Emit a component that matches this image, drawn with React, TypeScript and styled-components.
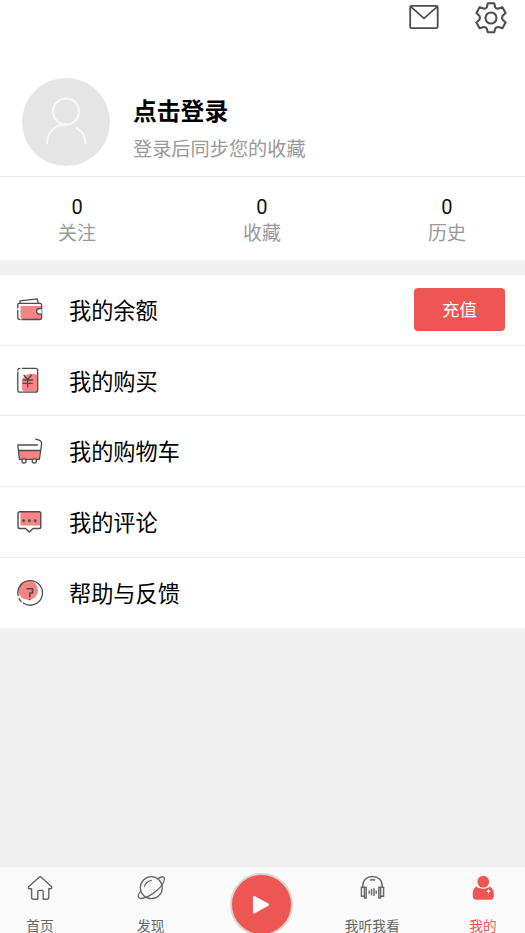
import React from 'react';
import styled, { createGlobalStyle } from 'styled-components';

const GlobalStyle = createGlobalStyle`
  * { box-sizing: border-box; }
  body {
    margin: 0;
    overflow: hidden;
    background: #f0f0f0;
    font-family: Roboto, "Noto Sans CJK SC", sans-serif;
  }
`;

const Screen = styled.div`
  width: 525px;
  height: 933px;
  overflow: hidden;
  display: flex;
  flex-direction: column;
  background: #f0f0f0;
`;

const TopBar = styled.header`
  height: 77px;
  flex: none;
  display: flex;
  justify-content: flex-end;
  align-items: flex-start;
  gap: 34px;
  padding: 1px 17px 0 0;
  background: #fff;
`;

const Profile = styled.section`
  height: 100px;
  flex: none;
  display: flex;
  align-items: flex-start;
  gap: 23px;
  padding: 1px 0 0 22px;
  background: #fff;
  border-bottom: 1px solid #e9e9e9;
`;

const Avatar = styled.div`
  width: 88px;
  height: 88px;
  border-radius: 50%;
  background: #e5e5e5;
`;

const ProfileText = styled.div`
  padding-top: 16px;
`;

const LoginTitle = styled.div`
  font-size: 23.8px;
  line-height: 36px;
  font-weight: 700;
  color: #000;
`;

const LoginHint = styled.div`
  font-size: 19.2px;
  line-height: 28px;
  margin-top: 6px;
  color: #999;
`;

const Stats = styled.section`
  height: 83px;
  flex: none;
  display: flex;
  justify-content: space-between;
  padding: 18px 59px 0 58px;
  background: #fff;
`;

const Stat = styled.div`
  display: flex;
  flex-direction: column;
  align-items: center;
`;

const StatValue = styled.span`
  font-size: 20px;
  line-height: 24px;
  color: #111;
`;

const StatLabel = styled.span`
  margin-top: 1px;
  font-size: 19px;
  line-height: 28px;
  color: #999;
`;

const Menu = styled.ul`
  list-style: none;
  margin: 15px 0 0;
  padding: 0;
  flex: none;
`;

const MenuRow = styled.li`
  height: 70.7px;
  display: flex;
  align-items: center;
  padding: 0 20px 0 14px;
  background: #fff;
  border-bottom: 1px solid #ebebeb;
  &:last-child { border-bottom-color: #fff; }
`;

const MenuLabel = styled.span`
  margin-left: 23px;
  padding-top: 2px;
  flex: 1;
  font-size: 22.2px;
  line-height: 32px;
  color: #000;
`;

const TopUpButton = styled.button`
  width: 91px;
  height: 43px;
  padding: 2px 0 0;
  border: 0;
  border-radius: 4px;
  background: #ee5653;
  color: #fff;
  font: 17.4px/41px Roboto, "Noto Sans CJK SC", sans-serif;
`;

const TabBar = styled.nav`
  height: 66px;
  margin-top: auto;
  flex: none;
  display: flex;
  justify-content: space-between;
  padding: 0 12px 0 10px;
  background: #fafafa;
`;

const Tab = styled.div<{ $active?: boolean }>`
  width: 60px;
  display: flex;
  flex-direction: column;
  align-items: center;
  padding-top: 6px;
  color: ${p => (p.$active ? '#ee5653' : '#666')};
`;

const TabLabel = styled.span`
  margin-top: 13px;
  font-size: 13.7px;
  line-height: 20px;
  white-space: nowrap;
`;

const PlayButton = styled.div`
  width: 63px;
  height: 63px;
  flex: none;
  margin: 6px -1px 0 -2px;
  border-radius: 50%;
  border: 2px solid #dcd2d2;
  background: #ee5653;
`;

const Icon = styled.svg`
  display: block;
  flex: none;
  fill: none;
  stroke-linecap: round;
  stroke-linejoin: round;
`;

const ink = '#4d4d4d';
const pink = '#fb8383';

const MailIcon = () => (
  <Icon width="32" height="32" viewBox="0 0 32 32" stroke={ink} strokeWidth="1.8">
    <rect x="2.2" y="4.8" width="27.5" height="22.4" rx="1.5" />
    <path d="M3 5.8L16 17.3L29 5.8" />
  </Icon>
);

const GearIcon = () => (
  <Icon width="34" height="34" viewBox="0 0 34 34" stroke={ink} strokeWidth="2.1">
    <path d="M13.8 2.2H20.2L21.2 6.2Q22.2 8 24.4 7.6L28.4 6.3L31.6 12L28.6 14.8Q27.4 16.8 28.6 18.8L31.6 21.6L28.4 27.3L24.4 26Q22.2 25.8 21.2 27.8L20.2 31.2H13.8L12.8 27.8Q11.8 25.8 9.6 26L5.6 27.3L2.4 21.6L5.4 18.8Q6.6 16.8 5.4 14.8L2.4 12L5.6 6.3L9.6 7.6Q11.8 8 12.8 6.2Z" />
    <circle cx="17" cy="17" r="5.5" />
  </Icon>
);

const AvatarIcon = () => (
  <Icon width="88" height="88" viewBox="0 0 88 88" stroke="#f8f8f8" strokeWidth="2">
    <circle cx="44" cy="33.5" r="13" />
    <path d="M25 65.5C25 54 33 46.5 44 46.5M54.5 50C60 53 63.5 58 63.5 65.5" />
  </Icon>
);

const WalletIcon = () => (
  <Icon width="32" height="32" viewBox="0 0 32 32" stroke={ink} strokeWidth="1.3">
    <path d="M6.5 12H27V25H9Q6.5 25 6.5 22Z" fill={pink} stroke="none" />
    <path d="M6 8.5V6.8L23.3 4.8L24.2 9M3.8 14V10.5Q3.8 9.3 5 9.3H26Q27.6 9.3 27.6 11V23.5Q27.6 25.5 25.6 25.5H8M3.8 16.5V23.5Q3.8 25.5 6 25.5" />
    <path d="M27.6 14.5H25.4A2.8 2.8 0 0 0 25.4 20.1H27.6" fill="#fff" />
  </Icon>
);

const PurchaseIcon = () => (
  <Icon width="32" height="32" viewBox="0 0 32 32" stroke={ink} strokeWidth="1.3">
    <path d="M8 16C9 9 17 7 23.5 10V26.5H11Q8 26.5 8 23Z" fill={pink} stroke="none" />
    <path d="M8.5 3.3H21.5Q23.7 3.3 23.7 5.5V24.9Q23.7 27.1 21.5 27.1H6Q3.8 27.1 3.8 24.9V7.2M3.8 5.2Q4 3.3 6 3.3" />
    <path d="M10 10.3L13.7 14.5L17.4 10.3M9 15H18.5M9 18.3H18.5M13.7 14.5V22" />
  </Icon>
);

const CartIcon = () => (
  <Icon width="32" height="32" viewBox="0 0 32 32" stroke={ink} strokeWidth="1.3">
    <path d="M4.6 15.5H26.2L25 24.2H5.4Z" fill={pink} stroke="none" />
    <path d="M21.7 4.2C25.8 5 28 6 27.6 8.8L25.4 24.4H5.4L3.8 10H23.4M4.6 15.5H26.4" />
    <circle cx="10" cy="26" r="2.1" fill="#fff" />
    <circle cx="20.3" cy="26" r="2.1" fill="#fff" />
  </Icon>
);

const CommentIcon = () => (
  <Icon width="32" height="32" viewBox="0 0 32 32" stroke={ink} strokeWidth="1.4">
    <path d="M6.5 6H26.5V19.5H6.5Z" fill={pink} stroke="none" />
    <path d="M5.8 5.7H25Q26.8 5.7 26.8 7.5V20.7Q26.8 22.5 25 22.5H19L15.3 26L11.6 22.5H5.8Q4 22.5 4 20.7V7.5Q4 5.7 5.8 5.7Z" />
    <path d="M9.6 14.8h.01M15.4 14.8h.01M21.2 14.8h.01" strokeWidth="2.9" />
  </Icon>
);

const HelpIcon = () => (
  <Icon width="32" height="32" viewBox="0 0 32 32" stroke={ink} strokeWidth="1.3">
    <circle cx="14.2" cy="13.2" r="9.8" fill={pink} stroke="none" />
    <path d="M9.5 26.2A12.3 12.3 0 1 0 4.2 18.6M5.2 21.6Q6 23.3 7.3 24.6" />
    <path d="M13 11.8H18.6V16H15.8V19.6M15.8 22.2V22.6" strokeWidth="1.6" />
  </Icon>
);

const HomeIcon = () => (
  <Icon width="30" height="30" viewBox="0 0 30 30" stroke="currentColor" strokeWidth="1.4">
    <path d="M14.4 4.1Q15.2 3.4 16 4.1L26.6 13.8Q27.3 15.3 25.8 15.7H23.8V24.2Q23.8 26.2 22 26.2H18.2V18.4Q18.2 17.4 17.2 17.4H13.8Q12.8 17.4 12.8 18.4V26.2H8.7Q6.6 26.2 6.6 24.2V15.7H4.4Q2.9 15.3 3.6 13.8Z" />
  </Icon>
);

const DiscoverIcon = () => (
  <Icon width="30" height="30" viewBox="0 0 30 30" stroke="currentColor" strokeWidth="1.3">
    <circle cx="15.3" cy="14.7" r="11" />
    <path d="M22.5 5.4C26 3 28.6 3.2 28.3 6.2C28 13.2 14.5 24.5 5.5 25.5C.8 25.5 1.8 21 4.9 18M8.5 13.2Q9.9 8.7 15.3 7.4" />
  </Icon>
);

const ListenIcon = () => (
  <Icon width="30" height="30" viewBox="0 0 30 30" stroke="currentColor" strokeWidth="1.4">
    <path d="M5.7 14V13C5.7 7 10 3.5 15.5 3.5S25.3 7 25.3 13V14M13.4 7Q15.5 6.4 17.6 7" />
    <path d="M7.4 14.3H4.4V23.3H7.4M23.6 14.3H26.6V23.3H23.6M7.4 14.3H9.2V25H7.4ZM21.8 14.3H23.6V25H21.8ZM12.2 18V20.3M14.6 16.4V21.8M17 15.8V22.4M19.2 18V20.3" />
  </Icon>
);

const MeIcon = () => (
  <Icon width="30" height="30" viewBox="0 0 30 30">
    <path d="M8 13.5C10 16 20 16 22 13.5C25.4 16 26.2 19.5 25.9 23.2Q25.5 26.8 22.5 26.8H8Q5 26.8 4.7 23.2C4.4 19.5 5 16 8 13.5Z" fill="currentColor" />
    <circle cx="15.3" cy="8.8" r="6.4" fill="currentColor" stroke="#fafafa" strokeWidth="1" />
    <path d="M20.5 15.7L21.2 17.5L22.9 18.2L21.2 18.9L20.5 20.7L19.8 18.9L18.1 18.2L19.8 17.5Z" fill="#fff" />
  </Icon>
);

const PlayIcon = () => (
  <Icon width="59" height="59" viewBox="0 0 59 59">
    <path d="M22.2 22.3V37.2L35.7 29.7Z" fill="#fff" stroke="#fff" strokeWidth="2.5" />
  </Icon>
);

const stats = ['关注', '收藏', '历史'];

const menu = [
  { label: '我的余额', icon: <WalletIcon />, action: '充值' },
  { label: '我的购买', icon: <PurchaseIcon /> },
  { label: '我的购物车', icon: <CartIcon /> },
  { label: '我的评论', icon: <CommentIcon /> },
  { label: '帮助与反馈', icon: <HelpIcon /> },
];

export default function App() {
  return (
    <>
      <GlobalStyle />
      <Screen>
        <TopBar>
          <MailIcon />
          <GearIcon />
        </TopBar>
        <Profile>
          <Avatar><AvatarIcon /></Avatar>
          <ProfileText>
            <LoginTitle>点击登录</LoginTitle>
            <LoginHint>登录后同步您的收藏</LoginHint>
          </ProfileText>
        </Profile>
        <Stats>
          {stats.map(label => (
            <Stat key={label}>
              <StatValue>0</StatValue>
              <StatLabel>{label}</StatLabel>
            </Stat>
          ))}
        </Stats>
        <Menu>
          {menu.map(item => (
            <MenuRow key={item.label}>
              {item.icon}
              <MenuLabel>{item.label}</MenuLabel>
              {item.action && <TopUpButton>{item.action}</TopUpButton>}
            </MenuRow>
          ))}
        </Menu>
        <TabBar>
          <Tab><HomeIcon /><TabLabel>首页</TabLabel></Tab>
          <Tab><DiscoverIcon /><TabLabel>发现</TabLabel></Tab>
          <PlayButton><PlayIcon /></PlayButton>
          <Tab><ListenIcon /><TabLabel>我听我看</TabLabel></Tab>
          <Tab $active><MeIcon /><TabLabel>我的</TabLabel></Tab>
        </TabBar>
      </Screen>
    </>
  );
}
